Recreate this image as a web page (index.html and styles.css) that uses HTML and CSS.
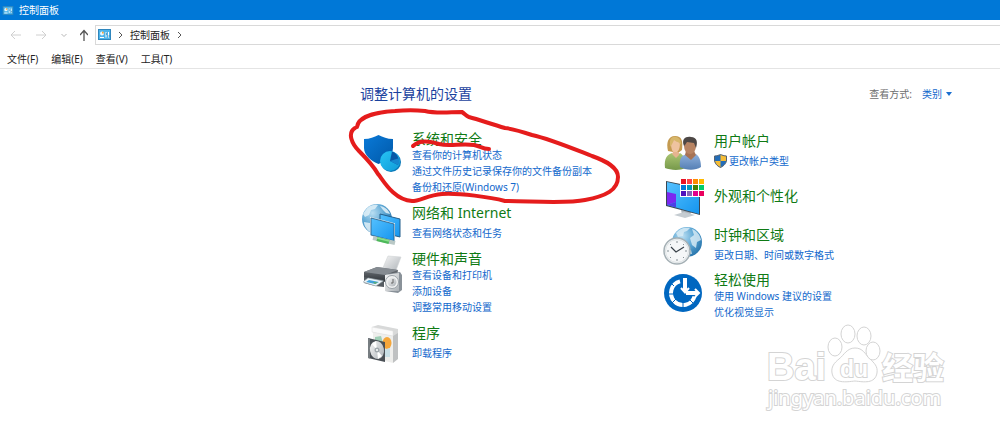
FILE: index.html
```
<!DOCTYPE html>
<html lang="zh-CN">
<head>
    <meta charset="UTF-8">
    <meta name="viewport" content="width=device-width, initial-scale=1.0">
    <title>控制面板</title>
    <link rel="stylesheet" href="styles.css">
</head>
<body>

    <svg class="defs" width="0" height="0" aria-hidden="true">
        <defs>
            <linearGradient id="blue" x1="0" y1="0" x2="1" y2="1">
                <stop offset="0" stop-color="#55c1ff"/><stop offset="1" stop-color="#1595ee"/>
            </linearGradient>
            <linearGradient id="shield" x1="0" y1="0" x2="1" y2="1">
                <stop offset="0" stop-color="#0a7ad8"/><stop offset="1" stop-color="#0058a8"/>
            </linearGradient>
            <linearGradient id="cyan" x1="0" y1="0" x2="1" y2="1">
                <stop offset="0" stop-color="#27c4f5"/><stop offset="1" stop-color="#109bd8"/>
            </linearGradient>
            <radialGradient id="globe" cx=".35" cy=".3" r=".75">
                <stop offset="0" stop-color="#b9def2"/><stop offset=".55" stop-color="#5aa5d3"/><stop offset="1" stop-color="#2875ac"/>
            </radialGradient>
            <linearGradient id="silver" x1="0" y1="0" x2="1" y2="1">
                <stop offset="0" stop-color="#f7f7f7"/><stop offset="1" stop-color="#aab0b5"/>
            </linearGradient>
            <linearGradient id="dark" x1="0" y1="0" x2="0" y2="1">
                <stop offset="0" stop-color="#777c82"/><stop offset="1" stop-color="#2e3338"/>
            </linearGradient>
            <linearGradient id="green" x1="0" y1="0" x2="0" y2="1">
                <stop offset="0" stop-color="#abc573"/><stop offset="1" stop-color="#76994a"/>
            </linearGradient>
            <linearGradient id="shirt" x1="0" y1="0" x2="0" y2="1">
                <stop offset="0" stop-color="#8eb0db"/><stop offset="1" stop-color="#557fb5"/>
            </linearGradient>
            <symbol id="panel" viewBox="0 0 13 11">
                <rect x=".5" y=".5" width="12" height="10" fill="#4db4ea" stroke="#2f86bd"/>
                <circle cx="4" cy="4.500" r="2" fill="#e9f7ff"/>
                <path d="M4 4.500V2.500A2 2 0 0 1 6 4.500Z" fill="#f2a33a"/>
                <path d="M2 8.500H6M8 3V8.500M10.500 3V8.500" stroke="#fff" fill="none"/>
                <path d="M8 5H9M10.500 7H11.500" stroke="#185f9b"/>
            </symbol>
        </defs>
    </svg>

    <header class="titlebar">
        <svg class="panel-small" aria-hidden="true"><use href="#panel"/></svg>
        <span>控制面板</span>
    </header>

    <nav class="toolbar">
        <div class="arrows">
            <button type="button" aria-label="后退"><svg width="12" height="12" viewBox="0 0 12 12"><path d="M11 6H1M5 2L1 6L5 10" stroke="#d0d0d0"/></svg></button>
            <button type="button" aria-label="前进"><svg width="12" height="12" viewBox="0 0 12 12"><path d="M1 6H11M7 2L11 6L7 10" stroke="#d0d0d0"/></svg></button>
            <button type="button" class="narrow" aria-label="最近"><svg width="8" height="12" viewBox="0 0 8 12"><path d="M1.500 5L4 7.500L6.500 5" stroke="#b8b8b8"/></svg></button>
            <button type="button" class="narrow" aria-label="向上"><svg width="8" height="12" viewBox="0 0 8 12"><path d="M4 12V1.500M0 6L4 1.500L8 6" stroke="#555" stroke-width="1.300"/></svg></button>
        </div>
        <div class="address">
            <svg class="panel-icon" aria-hidden="true"><use href="#panel"/></svg>
            <svg width="5" height="8" viewBox="0 0 5 8"><path d="M1 1L4 4L1 7" stroke="#555"/></svg>
            <button type="button">控制面板</button>
            <svg width="5" height="8" viewBox="0 0 5 8"><path d="M1 1L4 4L1 7" stroke="#555"/></svg>
        </div>
    </nav>

    <div class="menubar">
        <button type="button">文件(F)</button>
        <button type="button">编辑(E)</button>
        <button type="button">查看(V)</button>
        <button type="button">工具(T)</button>
    </div>

    <main class="content">
        <div class="heading-row">
            <h1>调整计算机的设置</h1>
            <div class="view-by">
                <label for="view">查看方式:</label>
                <select id="view">
                    <option>类别</option>
                </select>
                <svg width="6" height="4" viewBox="0 0 6 4"><path d="M0 0H6L3 4Z" fill="#1a6fd0"/></svg>
            </div>
        </div>

        <div class="columns">
            <div class="column">
                <section class="category">
                    <svg class="icon" viewBox="0 0 44 40" aria-hidden="true">
                        <path d="M4 6C10 6 14 4 18.500 2C23 4 27 6 33 6V15C33 22 26 28 18.500 31C11 28 4 22 4 15Z" fill="url(#shield)"/>
                        <circle cx="31" cy="29" r="10" fill="#0878b8"/>
                        <circle cx="30" cy="28" r="10" fill="url(#cyan)"/>
                        <path d="M30 28L32 18.500A10 10 0 0 1 38 32Z" fill="#0759a7"/>
                        <path d="M30 28L38 32A10 10 0 0 0 39.500 25Z" fill="#1687cf"/>
                    </svg>
                    <div class="text">
                        <h2><a href="#">系统和安全</a></h2>
                        <a href="#">查看你的计算机状态</a>
                        <a href="#">通过文件历史记录保存你的文件备份副本</a>
                        <a href="#">备份和还原(Windows 7)</a>
                    </div>
                </section>

                <section class="category short">
                    <svg class="icon" viewBox="0 0 44 40" aria-hidden="true">
                        <circle cx="17" cy="16" r="15" fill="url(#globe)"/>
                        <path d="M5 8C8 3 13 1 18 2L15 6L11 7L9 12L5 14L3 11ZM20 3C26 4 29 8 30 11L26 10L23 7ZM4 19L10 20L12 25L10 29C7 27 4 23 4 19Z" fill="#e2f1f8" opacity=".85"/>
                        <path d="M20 11L40 16V34L20 29Z" fill="url(#blue)" stroke="#235f8c"/>
                        <path d="M11 15L34 21V38L11 32Z" fill="url(#blue)" stroke="#dcebf3" stroke-width="2"/>
                        <path d="M11 15L34 21V38L11 32Z" fill="url(#blue)" stroke="#285c83" stroke-width=".8"/>
                        <path d="M13 35L35 40" stroke="#b9c8c5" stroke-width="4"/>
                        <path d="M17 36L29 39" stroke="#4eb95a" stroke-width="4"/>
                        <path d="M17 35L29 38" stroke="#8ce08e" stroke-width="1.500"/>
                    </svg>
                    <div class="text">
                        <h2><a href="#">网络和 Internet</a></h2>
                        <a href="#">查看网络状态和任务</a>
                    </div>
                </section>

                <section class="category">
                    <svg class="icon" viewBox="0 0 44 40" aria-hidden="true">
                        <path d="M22 17L28 3L41 4L35 20Z" fill="url(#silver)" stroke="#d0d3d5" stroke-width=".6"/>
                        <path d="M4 19L17 14L38 17L37 23L24 29L4 25Z" fill="url(#dark)"/>
                        <path d="M4 19L17 14L38 17L25 22Z" fill="#858b91"/>
                        <path d="M4 24L24 27V34L15 33L4 30Z" fill="#565c62"/>
                        <path d="M8 25L23 28L16 33L3 29Z" fill="#eef5f8" stroke="#a5b2ba" stroke-width=".6"/>
                        <path d="M9 27L19 29L15 31L6 29Z" fill="#42a2db"/><path d="M13 29L18 29.500L15 31Z" fill="#60ad68"/>
                        <path d="M26 21L40 19L42 22V37L38 40L25 38Z" fill="#8a9299"/>
                        <path d="M25 22L39 20V38L25 38Z" fill="url(#silver)"/>
                        <circle cx="32" cy="29" r="6.500" fill="#f2f3f3" stroke="#9aa2a8"/>
                        <circle cx="32" cy="29" r="4.500" fill="url(#silver)"/>
                        <path d="M33 26V30H31" stroke="#666" fill="none"/>
                    </svg>
                    <div class="text">
                        <h2><a href="#">硬件和声音</a></h2>
                        <a href="#">查看设备和打印机</a>
                        <a href="#">添加设备</a>
                        <a href="#">调整常用移动设置</a>
                    </div>
                </section>

                <section class="category short">
                    <svg class="icon" viewBox="0 0 44 40" aria-hidden="true">
                        <path d="M13 8L33 11V40L13 35Z" fill="#eeeeec"/>
                        <path d="M33 11L38 8V36L33 40Z" fill="#bfc1c2"/>
                        <path d="M12 4L18 2L38 6V10L33 13L12 9Z" fill="#d8d9d9"/>
                        <path d="M12 4L33 8V13L12 9Z" fill="#fafafa" stroke="#dcdcdc" stroke-width=".5"/>
                        <path d="M15 14L21 13L23 20L15 19Z" fill="#9fceb6"/>
                        <ellipse cx="27" cy="20" rx="4.500" ry="6" fill="#f5a63a"/>
                        <path d="M23 27L30 25V34H24Z" fill="#c9dfe6"/>
                        <path d="M8 15L25 19V39L8 35Z" fill="#4a5056"/>
                        <path d="M8 15L10 15.500V35.500L8 35Z" fill="#777d81"/>
                        <ellipse cx="17" cy="27" rx="7" ry="9" transform="rotate(-10 17 27)" fill="url(#silver)"/>
                        <path d="M17 27L12 21L16 18ZM17 27L22 33L18 36Z" fill="#fff"/>
                        <circle cx="17" cy="27" r="2.500" fill="#a0a8ad"/><circle cx="17" cy="27" r="1" fill="#fff"/>
                    </svg>
                    <div class="text">
                        <h2><a href="#">程序</a></h2>
                        <a href="#">卸载程序</a>
                    </div>
                </section>
            </div>

            <div class="column right">
                <section class="category short">
                    <svg class="icon" viewBox="0 0 44 40" aria-hidden="true">
                        <path d="M6 20C4 12 6 5 13 5C20 5 21 10 20 19L16 22Z" fill="#c49a50"/>
                        <path d="M9 12C9 8 12 8 15 8C19 9 19 19 14 22C10 22 9 17 9 12Z" fill="#efc39f"/>
                        <path d="M8 16C10 14 11 11 12 9C16 12 18 11 19 14C20 5 9 3 8 10Z" fill="#d7b66a"/>
                        <path d="M3 37C2 27 5 24 10 22L14 25L18 22C23 25 24 30 24 37C17 40 8 39 3 37Z" fill="url(#green)"/>
                        <path d="M11 21H17V24L14 27L10 23Z" fill="#e5b48f"/>
                        <path d="M18 36C17 27 20 24 25 23L30 26L34 23C38 26 39 31 39 36C33 40 23 39 18 36Z" fill="url(#shirt)"/>
                        <path d="M24 20H32L34 24L29 29L23 24Z" fill="#a77354"/>
                        <ellipse cx="28" cy="15" rx="6" ry="8" fill="#b88463"/>
                        <path d="M22 15C19 8 24 5 29 6C35 6 36 11 34 17L32 12L25 11L23 14Z" fill="#4d4745"/>
                    </svg>
                    <div class="text">
                        <h2><a href="#">用户帐户</a></h2>
                        <a class="with-shield" href="#">
                            <svg width="13" height="14" viewBox="0 0 13 14" aria-hidden="true">
                                <path d="M.500 2C3 2 5 1 6.500 .500C8 1 10 2 12.500 2V6C12.500 9 10 12 6.500 13.500C3 12 .500 9 .500 6Z" fill="#236db8"/>
                                <path d="M6.500 .500C8 1 10 2 12.500 2V7H6.500ZM.800 7H6.500V13.500C3.500 12 1.500 10 .800 7Z" fill="#f6bd36"/>
                                <path d="M.500 2C3 2 5 1 6.500 .500C8 1 10 2 12.500 2V6C12.500 9 10 12 6.500 13.500C3 12 .500 9 .500 6Z" fill="none" stroke="#566270"/>
                            </svg>更改帐户类型</a>
                    </div>
                </section>

                <section class="category short">
                    <svg class="icon" viewBox="0 0 44 40" aria-hidden="true">
                        <path d="M19 32L29 34L28 38L20 36Z" fill="#aab3ba"/>
                        <path d="M12 37L22 34L33 37L23 40Z" fill="#c5ccd1"/>
                        <path d="M4 3L38 10V37L4 28Z" fill="#3a4752"/>
                        <path d="M5 4L37 11V36L5 27Z" fill="url(#blue)"/>
                        <path d="M5 14L14 16V24L5 27Z" fill="#7a28f0"/>
                        <path d="M5 27L14 24V29.500Z" fill="#4c3fe6"/>
                        <rect x="18" y="0" width="25" height="19" fill="#fff"/>
                        <path d="M19 1h5v5h-5z" fill="#e81123"/><path d="M25 1h5v5h-5z" fill="#ff4343"/><path d="M31 1h5v5h-5z" fill="#ff8c00"/><path d="M37 1h5v5h-5z" fill="#ffb900"/>
                        <path d="M19 7h5v5h-5z" fill="#0078d7"/><path d="M25 7h5v5h-5z" fill="#0099bc"/><path d="M31 7h5v5h-5z" fill="#498205"/><path d="M37 7h5v5h-5z" fill="#00cc6a"/>
                        <path d="M19 13h5v5h-5z" fill="#4f12bd"/><path d="M25 13h5v5h-5z" fill="#8764b8"/><path d="M31 13h5v5h-5z" fill="#e3008c"/><path d="M37 13h5v5h-5z" fill="#ea005e"/>
                    </svg>
                    <div class="text">
                        <h2><a href="#">外观和个性化</a></h2>
                    </div>
                </section>

                <section class="category short">
                    <svg class="icon" viewBox="0 0 44 40" aria-hidden="true">
                        <circle cx="25" cy="17" r="15" fill="url(#globe)"/>
                        <path d="M14 8C18 3 23 2 28 3L25 6L22 7L21 11L16 12ZM30 4C35 6 38 10 39 15L35 17L34 23L30 20L28 13L32 10ZM23 28L29 25L30 29Z" fill="#dceef6" opacity=".8"/>
                        <circle cx="15" cy="26" r="13" fill="#f5f7f8" stroke="#a5b0b5" stroke-width="1.500"/>
                        <circle cx="15" cy="26" r="11.500" fill="none" stroke="#dde2e4"/>
                        <path d="M15 16V18M15 34V36M5 26H7M23 26H25M8 19L9 20M21 32L22 33M8 33L9 32M21 20L22 19" stroke="#879197"/>
                        <path d="M9 22L14 27L22 22" fill="none" stroke="#374047" stroke-width="1.200"/>
                    </svg>
                    <div class="text">
                        <h2><a href="#">时钟和区域</a></h2>
                        <a href="#">更改日期、时间或数字格式</a>
                    </div>
                </section>

                <section class="category">
                    <svg class="icon" viewBox="0 0 44 40" aria-hidden="true">
                        <circle cx="21" cy="19" r="19" fill="#0067c0"/>
                        <path d="M18 7.400A12 12 0 1 0 32.500 22.500" fill="none" stroke="#fff" stroke-width="4"/>
                        <path d="M12 12L8 8M11 20H6M14 25L10 29M21 28V34M27 25L31 29" stroke="#0067c0"/>
                        <path d="M23 4V17M24 19H36" stroke="#fff" stroke-width="4"/>
                        <path d="M23 4V17" stroke="#fff" stroke-width="3"/>
                        <path d="M19 14L23 18.500L27 14M33 15L37 19L33 23" fill="none" stroke="#fff" stroke-width="2"/>
                    </svg>
                    <div class="text">
                        <h2><a href="#">轻松使用</a></h2>
                        <a href="#">使用 Windows 建议的设置</a>
                        <a href="#">优化视觉显示</a>
                    </div>
                </section>
            </div>
        </div>

        <!-- hand-drawn marker around the first category -->
        <svg class="marker" width="274" height="98" viewBox="348 107 274 98" aria-hidden="true">
            <path d="M357 127C358 116 378 112 395 111C405 110 416 110 425 111C437 114 450 112 462 112C465 114 466 116 469 117C480 120 491 124 505 128C514 129 523 132 532 135C550 139 574 149 592 156C606 161 618 167 618 177C618 190 606 196 585 200C567 204 530 201 505 201C490 197 460 193 442 194C428 195 420 201 412 201C393 200 382 178 378 174C373 165 364 156 359 151C352 144 347 133 355 128"/>
            <path d="M413 146C419 140 430 141 439 144C450 147 460 143 474 145C480 146 482 149 489 149"/>
        </svg>
    </main>

    <svg class="watermark" width="190" height="94" viewBox="762 320 190 94">
        <text class="logo" x="767" y="380">Bai</text>
        <path d="M855 348C847 348 844 355 839 359C834 363 831 367 832 373C834 384 846 382 855 381C864 382 875 384 877 373C878 366 874 363 870 359C865 354 863 348 855 348Z"/>
        <ellipse cx="835" cy="347" rx="7" ry="9"/>
        <ellipse cx="848" cy="334" rx="7" ry="9"/>
        <ellipse cx="864" cy="336" rx="7" ry="9"/>
        <ellipse cx="873" cy="351" rx="7" ry="9"/>
        <text class="du" x="840" y="377">du</text>
        <text class="han" x="882" y="379">经验</text>
        <text class="site" x="768" y="405">jingyan.baidu.com</text>
    </svg>

</body>
</html>
```
FILE: styles.css
```
body {
    margin: 0;
    position: relative;
    min-height: 100vh;
    background: #fff;
    color: #222;
    font: 10px/16px "Noto Sans", "Noto Sans CJK SC", sans-serif;
}

button, select {
    padding: 0;
    border: none;
    background: none;
    color: inherit;
    font: inherit;
}

a {
    color: #1268cc;
    text-decoration: none;
}

a:hover {
    text-decoration: underline;
}

.defs {
    position: absolute;
}

.titlebar {
    display: flex;
    align-items: center;
    gap: 5px;
    height: 20px;
    padding-left: 2px;
    background: #0078d7;
    color: #fff;
}

.panel-small {
    width: 12px;
    height: 9px;
}

.panel-icon {
    width: 13px;
    height: 11px;
}

.toolbar {
    display: flex;
    align-items: center;
    height: 29px;
}

.toolbar path {
    fill: none;
}

.arrows {
    display: flex;
    gap: 12px;
    padding: 0 7px 0 10px;
}

.arrows button {
    width: 13px;
    height: 12px;
}

.arrows .narrow {
    width: 8px;
}

.arrows svg {
    display: block;
}

.address {
    display: flex;
    flex: 1;
    align-items: center;
    gap: 7px;
    height: 18px;
    padding-left: 2px;
    border: 1px solid #d9d9d9;
    border-right: none;
}

.menubar {
    display: flex;
    gap: 13px;
    padding: 2px 7px 1px;
    border-bottom: 1px solid #e4e4e4;
}

.content {
    padding: 16px 48px 0 36%;
}

.heading-row {
    display: flex;
    justify-content: space-between;
    align-items: center;
    margin-bottom: 28px;
}

h1 {
    margin: 0;
    color: #1a429e;
    font-size: 14px;
    font-weight: 400;
    line-height: 18px;
}

.view-by {
    display: flex;
    align-items: center;
    color: #6d6d6d;
}

.view-by select {
    width: 20px;
    margin: 0 4px 0 10px;
    appearance: none;
    color: #1268cc;
}

.columns {
    display: grid;
    grid-template-columns: 1fr 1fr;
    column-gap: 12px;
}

.column {
    display: flex;
    flex-direction: column;
    gap: 8px;
}

.column.right {
    gap: 7px;
}

.category {
    display: flex;
    align-items: flex-start;
    gap: 8px;
}

.icon {
    flex: none;
    width: 44px;
    height: 40px;
    margin-top: 2px;
    overflow: visible;
}

.text {
    display: flex;
    flex-direction: column;
    align-items: flex-start;
    white-space: nowrap;
}

h2 {
    margin: 0;
    font-size: 14px;
    font-weight: 400;
    line-height: 16px;
}

h2 a {
    color: #0f7a14;
}

.short {
    align-items: center;
}

.short .icon {
    margin-top: 0;
}

.short h2 {
    margin-bottom: 4px;
}

.with-shield {
    display: flex;
    align-items: center;
    gap: 2px;
}

.marker {
    position: absolute;
    top: 107px;
    left: calc(36% - 12px);
    pointer-events: none;
}

.marker path {
    fill: none;
    stroke: #e51c1c;
    stroke-width: 4;
    stroke-linecap: round;
}

.watermark {
    position: absolute;
    right: 48px;
    bottom: 18px;
    pointer-events: none;
    fill: #fff;
    stroke: #d4d4d4;
}

.watermark text {
    paint-order: stroke;
    stroke-width: 2px;
}

.logo {
    font: bold 38px "Liberation Sans", sans-serif;
}

.du {
    font: bold 23px "Liberation Sans", sans-serif;
}

.han {
    font: bold 31px "Noto Sans CJK SC", sans-serif;
}

.site {
    font: 20px "Noto Sans", sans-serif;
}
```
